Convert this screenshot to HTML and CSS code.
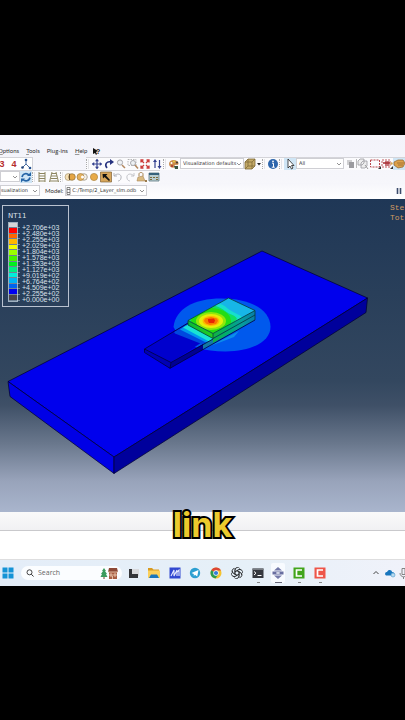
FILE: index.html
```
<!DOCTYPE html>
<html lang="en">
<head>
<meta charset="utf-8">
<title>Layer results</title>
<link rel="stylesheet" href="styles.css">
</head>
<body>
<main class="desktop">
  <header class="chrome">
    <nav class="menu">
      <a href="#"><u>O</u>ptions</a><a href="#"><u>T</u>ools</a><a href="#">Plu<u>g</u>-ins</a><a href="#"><u>H</u>elp</a>
      <button class="tool help" aria-label="Context help"><svg viewBox="0 0 12 12"><path d="M2 3v6l2-1 1 2 1-1-1-2 2-1z" fill="#111"/><text x="5" y="9" class="query">?</text></svg></button>
    </nav>

    <div class="bar">
      <div class="group first">
        <button class="tool num">3</button><button class="tool num">4</button>
        <button class="tool" aria-label="Axes"><svg viewBox="0 0 12 12"><path d="M6 2v4L2 10M6 6l4 4" stroke="#4a6da0" fill="none"/><circle cx="6" cy="2" r="1.3" fill="#234f91"/><circle cx="2.500" cy="9.500" r="1.300" fill="#22447b"/><circle cx="10" cy="10" r="1.300" fill="#234f91"/></svg></button>
      </div>
      <div class="group views">
        <i class="grip"></i>
        <button class="tool" aria-label="Pan"><svg viewBox="0 0 12 12"><path d="M6 1.500v9M1.500 6h9" stroke="#34418f" stroke-width="1.200"/><path d="M6 .8l2 2.400H4zM6 11.200l2-2.400H4zM.8 6l2.400-2v4zM11.200 6L8.800 4v4z" fill="#34418f"/></svg></button>
        <button class="tool" aria-label="Rotate"><svg viewBox="0 0 12 12"><path d="M4 10C1 6 4 3 8 4" stroke="#27337f" stroke-width="1.600" fill="none"/><path d="M7 1l4 3-4 3z" fill="#27337f"/></svg></button>
        <button class="tool" aria-label="Zoom"><svg viewBox="0 0 12 12"><circle cx="5" cy="4.500" r="2.600" fill="#eef1f4" stroke="#a9a9ad"/><path d="M7 7l3 3" stroke="#b3885f" stroke-width="1.500"/></svg></button>
        <button class="tool" aria-label="Box zoom"><svg viewBox="0 0 12 12"><path d="M1 1.500h8v6H1z" fill="none" stroke="#999" stroke-width=".7" stroke-dasharray="1.500 1"/><circle cx="6" cy="5" r="2.500" fill="#eef1f4" stroke="#a9a9ad"/><path d="M8 7l3 3.500" stroke="#b3885f" stroke-width="1.500"/></svg></button>
        <button class="tool" aria-label="Fit view"><svg viewBox="0 0 12 12"><path d="M2 4.500V2h2.500M7.500 2H10v2.500M10 7.500V10H7.500M4.500 10H2V7.500M2 2l3 3M10 2L7 5M10 10L7 7M2 10l3-3" stroke="#cc3b3b" stroke-width="1.300" fill="none"/></svg></button>
        <button class="tool" aria-label="Cycle views"><svg viewBox="0 0 12 12"><path d="M4 3v7M8.500 2v7" stroke="#34418f" stroke-width="1.200"/><path d="M4 1l2 3H2zM8.500 11l2-3h-4z" fill="#34418f"/></svg></button>
        <i class="grip"></i>
        <button class="tool" aria-label="Colors"><svg viewBox="0 0 12 12"><path d="M1 6c0-4 5-5 8-3 2 1 2 4 0 4-2-.5-3 0-2 2C5 11 1 9 1 6z" fill="#c98a4b"/><circle cx="3.500" cy="5" r="1" fill="#fff"/><circle cx="6" cy="3.500" r="1" fill="#e8d54a"/><circle cx="9" cy="4.500" r="1" fill="#333"/><circle cx="4" cy="8" r="1" fill="#a33"/><path d="M6 8h4v3H7z" fill="#38523f"/></svg></button>
        <label class="pick wide"><select aria-label="Color code"><option>Visualization defaults</option></select><svg viewBox="0 0 6 6"><path d="M1 2l2 2 2-2"/></svg></label>
        <button class="tool" aria-label="Render style"><svg viewBox="0 0 12 12"><path d="M1 4l3-3h7v7l-3 3H1z" fill="#c5ab68" stroke="#7f6b38" stroke-width=".8"/><path d="M1 4h7v7M8 4l3-3M4 1v7h7M4 8l-3 3" fill="none" stroke="#7f6b38" stroke-width=".8"/></svg></button>
        <button class="tool slim" aria-label="More styles"><svg viewBox="0 0 6 12"><path d="M1 5h4L3 7.500z" fill="#222"/></svg></button>
        <i class="grip"></i>
        <button class="tool" aria-label="Information"><svg viewBox="0 0 12 12"><circle cx="6" cy="6" r="5" fill="#2e66ac"/><circle cx="6" cy="3.300" r=".9" fill="#fff"/><path d="M5 5.200h1.500v4M4.800 9.200h3" stroke="#fff" fill="none"/></svg></button>
        <i class="grip"></i>
        <button class="tool on" aria-label="Select"><svg viewBox="0 0 12 12"><path d="M4 1v9l2-2 1.500 3 1.500-1-1.500-2.500H10z" fill="#fff" stroke="#222" stroke-width=".8"/></svg></button>
        <label class="pick mid"><select aria-label="Selection filter"><option>All</option></select><svg viewBox="0 0 6 6"><path d="M1 2l2 2 2-2"/></svg></label>
        <button class="tool" aria-label="Entity"><svg viewBox="0 0 12 12"><path d="M3 2h5v5H3z" fill="#cfcfd1"/><path d="M5 4h5v6H5z" fill="#9b9b9f"/></svg></button>
        <i class="rule"></i>
        <button class="tool" aria-label="Group"><svg viewBox="0 0 12 12"><path d="M1 3l2-2h4v4L5 7H1zM4 5l2-2h4v5L8 10H4z" fill="#eee" stroke="#9a9aa0" stroke-width=".8"/><path d="M8 7l3 4" stroke="#999"/></svg></button>
        <button class="tool" aria-label="Rectangle selection"><svg viewBox="0 0 12 12"><path d="M1.500 2h9v7h-9z" fill="none" stroke="#b9444a" stroke-dasharray="2 1"/><path d="M9 11h3V8z" fill="#333"/></svg></button>
        <button class="tool" aria-label="Inside selection"><svg viewBox="0 0 12 12"><path d="M1 2h8v7H1z" fill="none" stroke="#c25a5e" stroke-dasharray="2 1"/><path d="M2 5h7M5 3v5M7 3v5" stroke="#a92c33" stroke-width="1.300"/><circle cx="10.500" cy="5.500" r="1.200" fill="#d2a350"/><path d="M9 11h3V8z" fill="#333"/></svg></button>
        <button class="tool on" aria-label="Highlight"><svg viewBox="0 0 12 12"><path d="M1 4l4-2h5l2 3-2 4-5 1-4-3z" fill="#dda14a" stroke="#8d632f" stroke-width=".7"/><path d="M4 5h7M5 7h5" stroke="#8d632f" stroke-width=".7"/></svg></button>
      </div>
    </div>

    <div class="bar">
      <div class="group">
        <label class="pick tiny"><select aria-label="Frame set"><option></option></select><svg viewBox="0 0 6 6"><path d="M1 2l2 2 2-2"/></svg></label>
        <button class="tool on" aria-label="Refresh"><svg viewBox="0 0 12 12"><path d="M2 6c1-4 5-4 7-2M10 6.500c-1 4-5 4-7 2" fill="none" stroke="#2463a5" stroke-width="1.700"/><path d="M7 5h4V1zM5 7.500H1v4z" fill="#2463a5"/></svg></button>
        <i class="grip"></i>
        <button class="tool" aria-label="Ladder"><svg viewBox="0 0 12 12"><path d="M3 1v10M9 1v10M3 2.500h6M3 5h6M3 7.500h6M3 10h6" stroke="#8c8560"/></svg></button>
        <button class="tool" aria-label="Perspective"><svg viewBox="0 0 12 12"><path d="M4 1L1.500 11M8 1l2.500 10M4 2.500h4M3 5h6M3 7.500h6M2 10h8" stroke="#8c8560" fill="none"/></svg></button>
        <i class="grip"></i>
        <button class="tool" aria-label="Union"><svg viewBox="0 0 12 12"><circle cx="4.500" cy="6" r="3.500" fill="#f5dfb4" stroke="#a89774" stroke-width=".7"/><circle cx="8" cy="6" r="3.300" fill="#e5a544" stroke="#8d713b" stroke-width=".7"/><path d="M5.500 3v6" stroke="#66502d"/></svg></button>
        <button class="tool" aria-label="Subtract"><svg viewBox="0 0 12 12"><circle cx="8" cy="6" r="3.300" fill="#f4f0e8" stroke="#948a76" stroke-width=".7"/><circle cx="4.500" cy="6" r="3.500" fill="#e4b15e" stroke="#a07b3b" stroke-width=".7"/><circle cx="6.500" cy="6" r="1.500" fill="#fff"/></svg></button>
        <button class="tool" aria-label="Fill"><svg viewBox="0 0 12 12"><circle cx="6" cy="6" r="3.600" fill="#e8aa47" stroke="#ad8542" stroke-width=".7"/></svg></button>
        <button class="tool" aria-label="Pointer"><svg viewBox="0 0 12 12"><path d="M.5 1h11v10H.5z" fill="#d8a65b" stroke="#806137" stroke-width=".7"/><path d="M2.500 3h5L6 4.500 10 9 9 10 4.500 6 3 7.500z" fill="#111"/></svg></button>
        <button class="tool" aria-label="Undo"><svg viewBox="0 0 12 12"><path d="M2 2v3h3M2 5c4-4 8-1 7 2 0 2-2 3-3 3" fill="none" stroke="#b5b6bc"/></svg></button>
        <button class="tool" aria-label="Redo"><svg viewBox="0 0 12 12"><path d="M10 2v3H7M10 5C6 1 2 4 3 7c0 2 2 3 3 3" fill="none" stroke="#c4c5ca"/></svg></button>
        <button class="tool" aria-label="Lock"><svg viewBox="0 0 12 12"><path d="M3 5V3c0-2 4-2 4 0v2" fill="none" stroke="#a78555"/><path d="M1 10l1-4 5-1 2 5z" fill="#d9ba80" stroke="#a78555" stroke-width=".6"/><path d="M9 9h2v2H9z" fill="#9a7b4e"/></svg></button>
        <button class="tool" aria-label="Options table"><svg viewBox="0 0 12 12"><path d="M1 2h10v8H1z" fill="#b9cdd0" stroke="#5c7780" stroke-width=".8"/><path d="M1 2h10v2H1z" fill="#36617b"/><path d="M2 6.500h2M5 6.500h2M8 6.500h2M2 8.500h2M8 8.500h2" stroke="#7d6a3c"/></svg></button>
      </div>
    </div>

    <div class="bar context">
      <label class="pick module"><select aria-label="Module"><option>sualization</option></select><svg viewBox="0 0 6 6"><path d="M1 2l2 2 2-2"/></svg></label>
      <label class="caption-label" for="model">Model:</label>
      <span class="pick model"><svg class="file" viewBox="0 0 5 8"><path d="M1 .5h3v7H1zM1 2.500h3M1 5.500h3" fill="none" stroke="#666" stroke-width=".8"/></svg><select id="model"><option>C:/Temp/2_Layer_slm.odb</option></select><svg viewBox="0 0 6 6"><path d="M1 2l2 2 2-2"/></svg></span>
      <button class="tool pause" aria-label="Pause"><svg viewBox="0 0 12 12"><path d="M4.500 3v6M7.500 3v6" stroke="#3b4a6b" stroke-width="1.600"/></svg></button>
    </div>
  </header>

  <section class="viewport">
    <svg class="scene" viewBox="0 199 405 313" role="img" aria-label="Temperature contour on a slab">
      <defs>
        <clipPath id="block"><path d="M188 320.500L228.500 298 255 310.500 213 333.500z"/></clipPath>
        <linearGradient id="front" x1="0" x2="1"><stop offset="0" stop-color="#08b934"/><stop offset="1" stop-color="#24cd22"/></linearGradient>
        <linearGradient id="side" x1="213" x2="255" y1="0" y2="0" gradientUnits="userSpaceOnUse"><stop offset="0" stop-color="#13b340"/><stop offset=".35" stop-color="#00ad70"/><stop offset=".7" stop-color="#079c9d"/><stop offset="1" stop-color="#087ca8"/></linearGradient>
      </defs>
      <g stroke="#00002c" stroke-width=".7" stroke-linejoin="round">
        <path d="M8 381.500L262 251l105.500 47L114 457z" fill="#0000ed"/>
        <path d="M8 381.500L114 457v16.500L10 396.500z" fill="#0000e6"/>
        <path d="M114 457l253.500-159-1.500 14.500-252 161z" fill="#00009c"/>
      </g>
      <path d="M173.500 327c2-18 20-28.500 48-28.500 30 0 49 12 49 28.500 0 14-18 24.500-45 24.500-22 0-36-5-46-14z" fill="#0059ed"/>
      <path d="M210 346l29-15-5 6-13 5-14 5z" fill="#0b8fe8"/>
      <path d="M144.500 349L188 323l25 12-42 27.500z" fill="#0000cd"/>
      <path d="M174 332l14-8.500 25 12v4l-10 5-28-11z" fill="#0048df"/>
      <path d="M180 329.500l6-4 27 12.500v2l-6 3z" fill="#0096ef"/>
      <path d="M183 327.500l5-3 25 12.500v3l-4 1.500z" fill="#19e3d3"/>
      <path d="M171 362.500l32-18.500v5.500l-33 19z" fill="#000091"/>
      <path d="M203 345l10-6 42-24v5l-52 28.500z" fill="url(#side)"/>
      <path d="M203 345l10-6v5l-10 5z" fill="#1379a4"/>
      <path d="M144.500 349l26.500 13.500-1 6-25-16z" fill="#0000b5"/>
      <path d="M144.500 349L188 323M144.500 349l26.500 13.500L213 339M144.500 349v3.500l25.500 15.800L255 320M171 362.500l-1 5.800" fill="none" stroke="#00003c" stroke-width=".8"/>
      <path d="M188 320.500l25 13v5L188 325z" fill="url(#front)"/>
      <path d="M213 333.500l42-23v4.500l-42 23.500z" fill="url(#side)"/>
      <g clip-path="url(#block)">
        <path d="M180 290h80v50h-80z" fill="#17b6e7"/>
        <path d="M180 303c23-1 39-3 47 5 6 5 12 6 15 9l-22 23h-40z" fill="#16dfce"/>
        <path d="M180 306c24-3 38-2 45 5 5 4 11 4 12 8l-20 21h-37z" fill="#10df65"/>
        <ellipse cx="211" cy="321" rx="20" ry="13" fill="#24dc16"/>
        <ellipse cx="211" cy="321" rx="15" ry="9" fill="#91e70b"/>
        <ellipse cx="211" cy="321" rx="12" ry="7" fill="#e6ee08"/>
        <ellipse cx="211" cy="321" rx="8.500" ry="5" fill="#ffb700"/>
        <path d="M205 318.500l6-1.500 6 1.500 1 2.500-2 3-6 1-4-1.500-2-2.500z" fill="#f97900"/>
        <path d="M208 319l6-.5 1 2-1 2.500h-5l-1-2z" fill="#e92405"/>
      </g>
      <path d="M188 320.500L228.500 298 255 310.500 213 333.500zM188 320.500v4.500l25 13.500v-5M255 310.500V320M213 338.500l42-23.500" fill="none" stroke="#053c35" stroke-width=".8"/>
    </svg>

    <aside class="legend">
      <h1>NT11</h1>
      <div class="scale">
        <div class="swatches"><i class="c0"></i><i class="c1"></i><i class="c2"></i><i class="c3"></i><i class="c4"></i><i class="c5"></i><i class="c6"></i><i class="c7"></i><i class="c8"></i><i class="c9"></i><i class="c10"></i><i class="c11"></i><i class="c12"></i><i class="c13"></i></div>
        <ol class="values"><li>+2.706e+03</li><li>+2.480e+03</li><li>+2.255e+03</li><li>+2.029e+03</li><li>+1.804e+03</li><li>+1.578e+03</li><li>+1.353e+03</li><li>+1.127e+03</li><li>+9.019e+02</li><li>+6.764e+02</li><li>+4.509e+02</li><li>+2.255e+02</li><li>+0.000e+00</li></ol>
      </div>
    </aside>
    <div class="step"><p>Ste</p><p>Tot</p></div>
    <p class="subtitle">link</p>
  </section>

  <div class="prompt"></div>
  <div class="messages"></div>

  <footer class="taskbar">
    <button class="app start" aria-label="Start"><svg viewBox="0 0 14 14"><path d="M1.500 1.500h5v5h-5zM7.500 1.500h5v5h-5zM1.500 7.500h5v5h-5zM7.500 7.500h5v5h-5z" fill="#1593d6"/></svg></button>
    <label class="search">
      <svg viewBox="0 0 8 8"><circle cx="3.500" cy="3.300" r="2.500" fill="none" stroke="#333" stroke-width=".9"/><path d="M5.300 5.200L7.500 7.500" stroke="#333"/></svg>
      <input type="text" placeholder="Search" aria-label="Search">
      <svg class="holiday" viewBox="0 0 18 12"><path d="M4 1L2 4h1L1 7h1L.5 10h7L6 7h1L5 4h1z" fill="#3b9b5d"/><path d="M3.500 10h1v2h-1z" fill="#75492c"/><path d="M9 5h8v7H9z" fill="#a85e43"/><path d="M8 5l1-4h8l1 4z" fill="#8d4936"/><path d="M8 5h10M10 7h2v2h-2zM14 7h2v2h-2zM12.500 9v3" stroke="#f2d5bb" stroke-width=".8" fill="none"/></svg>
    </label>
    <div class="apps">
      <button class="app" aria-label="Task view"><svg viewBox="0 0 14 14"><path d="M5 3h8v7H5z" fill="#d8d9dc"/><path d="M3 3h3v5h6v4H3z" fill="#333539"/></svg></button>
      <button class="app" aria-label="Files"><svg viewBox="0 0 14 14"><path d="M1 2h4l1.500 1.500H12V7H1z" fill="#d99b20"/><path d="M1 4.500h12V12H1z" fill="#fbd05b"/><path d="M4 8.500h6l2 3.500H2z" fill="#1976bd"/></svg></button>
      <button class="app" aria-label="Mathcad"><svg viewBox="0 0 14 14"><path d="M1.500 1.500h11v11h-11z" fill="#3148d0"/><path d="M3 10l3-6v6l3-6M9 10V6l2-2v6" fill="none" stroke="#e7ecff" stroke-width="1.100"/></svg></button>
      <button class="app" aria-label="Telegram"><svg viewBox="0 0 14 14"><circle cx="7" cy="7" r="5.200" fill="#2c9fd1"/><path d="M3.500 7l7-3-1.300 6.500L7 8.800 5.800 10V8z" fill="#fff"/></svg></button>
      <button class="app" aria-label="Chrome"><svg viewBox="0 0 14 14"><circle cx="7" cy="7" r="5.500" fill="#f5c42e"/><path d="M7 7L2.200 4.300A5.500 5.500 0 0 1 12 4.500H7z" fill="#dc4535"/><path d="M7 7L2.200 4.300A5.500 5.500 0 0 0 6.500 12.500L9.300 8.300z" fill="#2b9a50"/><circle cx="7" cy="7" r="2.700" fill="#fff"/><circle cx="7" cy="7" r="2.100" fill="#347bd5"/></svg></button>
      <button class="app" aria-label="ChatGPT"><svg viewBox="0 0 24 24"><g fill="none" stroke="#27292c" stroke-width="1.300"><path id="petal" d="M8.500 14V7a4.500 4.500 0 0 1 8.300-2.500M8.500 10l6-3.500a4.500 4.500 0 0 1 5 .5"/><use href="#petal" transform="rotate(60 12 12)"/><use href="#petal" transform="rotate(120 12 12)"/><use href="#petal" transform="rotate(180 12 12)"/><use href="#petal" transform="rotate(240 12 12)"/><use href="#petal" transform="rotate(300 12 12)"/></g></svg></button>
      <button class="app open" aria-label="Terminal"><svg viewBox="0 0 14 14"><path d="M1.500 2.500h11v9.500h-11z" fill="#35383e"/><path d="M1.500 2.500h11V4h-11z" fill="#777b81"/><path d="M3 5.500l2 1.700L3 9M6.500 9.500h4" fill="none" stroke="#fff"/></svg></button>
      <button class="app open active" aria-label="Abaqus"><svg viewBox="0 0 14 14"><path d="M7 1l4 3.500H3zM7 13l4-3.500H3z" fill="#7379a9"/><path d="M1.500 5.500h4v3h-4zM8.500 5.500h4v3h-4z" fill="#686ea0"/><path d="M5 7h4M4 5.500h6M4 8.500h6" stroke="#a6abc9"/></svg></button>
      <button class="app open" aria-label="Camtasia"><svg viewBox="0 0 14 14"><path d="M1.500 1.500h11v11h-11z" fill="#42a51b"/><path d="M10 4H4.500v6H10" fill="none" stroke="#fff" stroke-width="1.700"/></svg></button>
      <button class="app open" aria-label="Recorder"><svg viewBox="0 0 14 14"><path d="M1.500 1.500h11v11h-11z" fill="#ee5549"/><path d="M10 4H4.500v6H10" fill="none" stroke="#fff" stroke-width="1.700"/></svg></button>
    </div>
    <div class="tray">
      <button class="app" aria-label="Hidden icons"><svg viewBox="0 0 14 14"><path d="M4.500 8L7 5.500 9.500 8" fill="none" stroke="#444"/></svg></button>
      <button class="app" aria-label="OneDrive"><svg viewBox="0 0 14 14"><path d="M4 9.500c-3 0-2-4 0-3.500 1-3 5-2.500 5 0 3 0 3 3.500 1 3.500z" fill="#1976bd"/><circle cx="10" cy="9" r="2" fill="#b7d9ef" stroke="#4b9acb" stroke-width=".6"/></svg></button>
      <button class="app" aria-label="Microphone"><svg viewBox="0 0 14 14"><path d="M5 2.500h3v6H5zM3 7c0 5 7 5 7 0M6.500 11v2" fill="none" stroke="#777" stroke-width=".9"/></svg></button>
    </div>
  </footer>
</main>
</body>
</html>
```

FILE: styles.css
```
* { box-sizing: border-box; }
body {
  margin: 0;
  min-height: 100vh;
  display: flex;
  flex-direction: column;
  justify-content: center;
  background: #000;
  color: #333;
  font: 6px/12px Lato, "Open Sans", sans-serif;
  overflow: hidden;
}
button, select, input { font: inherit; color: inherit; border: 0; margin: 0; padding: 0; background: none; }
p, h1, ol { margin: 0; padding: 0; list-style: none; }
svg { display: block; }
.desktop { overflow: hidden; background: #fff; }

.chrome { padding-top: 11px; background: linear-gradient(#f3f3fa, #f6f6fb 70%, #fcfcfe); }
.menu { display: flex; align-items: center; height: 11px; gap: 7px; margin-left: -2px; }
.menu a { color: #333; text-decoration: none; }
.menu u { text-underline-offset: 1px; text-decoration-thickness: 1px; text-decoration-color: #999; }
.help { margin-left: -3px; }
.query { font: bold 7px "Liberation Sans", sans-serif; fill: #111; }

.bar { display: flex; align-items: center; height: 13px; }
.group { display: flex; align-items: center; height: 13px; background: #fbfbfd; border: solid #d4d4d9; border-width: 1px 0 0; }
.first { margin-left: -4px; background: #fff; border-right-width: 1px; }
.views { margin-left: 53px; flex: 1; }
.views .grip { width: 5px; }
.tool { flex: none; width: 12px; height: 12px; display: grid; place-items: center; }
.tool svg { width: 12px; height: 12px; }
.slim { width: 6px; }
.slim svg { width: 6px; }
.num { font: bold 9px/12px "Liberation Sans", sans-serif; color: #b52c2c; }
.on { background: #cfe5f5; }
.grip { flex: none; width: 4px; height: 10px; border-left: 1px dotted #aaa; background: linear-gradient(#e4e4e8, #e4e4e8) 1px 0 / 1px 100% no-repeat; }
.rule { flex: none; width: 1px; height: 9px; background: #bbb; }

.pick { position: relative; flex: none; display: flex; align-items: center; height: 11px; background: #fff; border: 1px solid #cfcfd4; }
.pick select { appearance: none; width: 100%; height: 9px; padding-left: 2px; font: 5px/9px "DejaVu Sans", sans-serif; }
.pick > svg:last-child { position: absolute; right: 1px; width: 6px; height: 6px; fill: none; stroke: #777; stroke-width: .8; }
.wide { width: 64px; }
.mid { width: 48px; }
.tiny { width: 20px; }
.module { width: 40px; }
.pick.module select { padding-left: 0; }
.model { width: 82px; }
.pick.model select { padding-left: 1px; }
.file { flex: none; width: 5px; height: 8px; }
.context { height: 16px; background: linear-gradient(#f6f6fb, #fff); }
.caption-label { margin: 0 2px 0 5px; }
.pause { margin-left: auto; }

.viewport {
  position: relative;
  background: linear-gradient(#1f3756, #293f5a 30%, #33475f 58%, #3f5067 66%, #69778c 78%, #98a3ba 90%, #a9b5cd);
}
.scene { width: 100%; }
.legend {
  position: absolute;
  left: 2px;
  top: 6px;
  width: 67px;
  height: 102px;
  padding: 4px 5px;
  border: 1px solid #b9c2d0;
  color: #dbe1ea;
  font: 7px/6px "Liberation Sans", sans-serif;
}
.legend h1 { font: 7px/12px "DejaVu Sans", sans-serif; }
.scale { display: flex; gap: 4px; height: 80px; }
.swatches { display: grid; grid-template-rows: repeat(14, 1fr); width: 10px; border: 1px solid #9fb0bf; }
.swatches i { border-bottom: 1px solid rgba(220, 235, 240, .4); margin-right: -3px; background-size: 8px 100%; background-repeat: no-repeat; }
.values { display: grid; grid-template-rows: repeat(13, 1fr); height: 74px; margin-top: 3px; }
.c0 { background-image: linear-gradient(#d5d5d9, #d5d5d9); }
.c1 { background-image: linear-gradient(#f00, #f00); }
.c2 { background-image: linear-gradient(#ff6500, #ff6500); }
.c3 { background-image: linear-gradient(#ffb800, #ffb800); }
.c4 { background-image: linear-gradient(#f3ff00, #f3ff00); }
.c5 { background-image: linear-gradient(#9cff00, #9cff00); }
.c6 { background-image: linear-gradient(#45f500, #45f500); }
.c7 { background-image: linear-gradient(#00ef20, #00ef20); }
.c8 { background-image: linear-gradient(#00ee83, #00ee83); }
.c9 { background-image: linear-gradient(#00eeda, #00eeda); }
.c10 { background-image: linear-gradient(#00b4f4, #00b4f4); }
.c11 { background-image: linear-gradient(#0064f0, #0064f0); }
.c12 { background-image: linear-gradient(#0000ee, #0000ee); }
.c13 { background-image: linear-gradient(#4b4548, #4b4548); }
.step { position: absolute; right: 0; top: 4px; width: 15px; font: 8px/10px "Liberation Mono", monospace; color: #d29a62; }
.subtitle {
  position: absolute;
  left: 0;
  right: 0;
  bottom: -33px;
  z-index: 1;
  text-align: center;
  font: bold 34px/40px Inter, sans-serif;
  color: #ecca2d;
  -webkit-text-stroke: 4px #000;
  paint-order: stroke fill;
}

.prompt { height: 19px; background: linear-gradient(#fafafa, #f1f1f3); border-bottom: 1px solid #c9c9cc; }
.messages { height: 29px; background: #fff; border-bottom: 1px solid #dededf; }

.taskbar { display: flex; align-items: center; height: 26px; background: linear-gradient(90deg, #e4edf8, #e6f0f8 60%, #f0f2fa); }
.app { position: relative; width: 14px; height: 20px; display: grid; place-items: center; justify-self: center; }
.app svg { width: 14px; height: 14px; }
.start { margin: 0 6px 0 1px; }
.search { display: flex; align-items: center; gap: 4px; width: 101px; height: 14px; padding: 0 4px 0 5px; border-radius: 7px; background: #fbfdff; }
.search svg { flex: none; width: 8px; height: 8px; }
.search .holiday { width: 18px; height: 12px; }
.search input { flex: 1; min-width: 0; height: 12px; outline: 0; font: 7px/12px "Open Sans", sans-serif; }
.search input::placeholder { color: #666; }
.apps { display: grid; grid-template-columns: repeat(10, 1fr); width: 207px; margin-left: 1px; }
.open::after { content: ""; position: absolute; bottom: 0; left: 6px; width: 3px; height: 1px; background: #888; }
.active { background: #f8fbff; border-radius: 2px; }
.active::after { left: 4px; width: 7px; background: #667; }
.tray { display: flex; margin-left: auto; margin-right: -6px; }
```
